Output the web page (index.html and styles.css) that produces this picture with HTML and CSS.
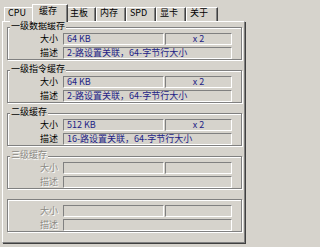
FILE: index.html
```html
<!DOCTYPE html>
<html lang="zh-CN">
<head>
<meta charset="utf-8">
<title>CPU-Z 缓存</title>
<link rel="stylesheet" href="styles.css">
</head>
<body>
<div class="tabs">
  <div class="tab">CPU</div>
  <div class="tab tab-active">缓存</div>
  <div class="tab">主板</div>
  <div class="tab">内存</div>
  <div class="tab">SPD</div>
  <div class="tab">显卡</div>
  <div class="tab tab-wide">关于</div>
</div>
<div class="panel">
  <section class="group">
    <span class="group-title">一级数据缓存</span>
    <div class="row"><span class="label">大小</span><span class="field f-size">64 KB</span><span class="field f-count">x 2</span></div>
    <div class="row"><span class="label">描述</span><span class="field f-desc">2-路设置关联，64-字节行大小</span></div>
  </section>
  <section class="group">
    <span class="group-title">一级指令缓存</span>
    <div class="row"><span class="label">大小</span><span class="field f-size">64 KB</span><span class="field f-count">x 2</span></div>
    <div class="row"><span class="label">描述</span><span class="field f-desc">2-路设置关联，64-字节行大小</span></div>
  </section>
  <section class="group">
    <span class="group-title">二级缓存</span>
    <div class="row"><span class="label">大小</span><span class="field f-size">512 KB</span><span class="field f-count">x 2</span></div>
    <div class="row"><span class="label">描述</span><span class="field f-desc">16-路设置关联，64-字节行大小</span></div>
  </section>
  <section class="group disabled">
    <span class="group-title">三级缓存</span>
    <div class="row"><span class="label">大小</span><span class="field f-size"></span><span class="field f-count"></span></div>
    <div class="row"><span class="label">描述</span><span class="field f-desc"></span></div>
  </section>
  <section class="group disabled">
    <div class="row"><span class="label">大小</span><span class="field f-size"></span><span class="field f-count"></span></div>
    <div class="row"><span class="label">描述</span><span class="field f-desc"></span></div>
  </section>
</div>
</body>
</html>
```
FILE: styles.css
```css
html, body {
  margin: 0;
  padding: 0;
}
body {
  width: 264px;
  height: 247px;
  overflow: hidden;
  background: #d6d3cc;
  font-family: "Noto Sans CJK SC", "Noto Sans", sans-serif;
  font-size: 9px;
  color: #000;
}

.tabs {
  display: flex;
  align-items: flex-end;
  height: 21px;
  padding-left: 4px;
}
.tab {
  box-sizing: border-box;
  width: 30px;
  height: 14px;
  padding: 0 0 3px 3px;
  line-height: 10px;
  border-top: 1px solid #fff;
  border-left: 1px solid #fff;
  border-right: 1px solid #404040;
  box-shadow: inset -1px 0 0 #808080;
  white-space: nowrap;
}
.tab-wide {
  width: 32px;
}
.tab-active {
  position: relative;
  z-index: 1;
  width: 36px;
  height: 18px;
  margin: 0 -2px -1px;
  padding: 1px 0 6px 6px;
  background: #d6d3cc;
}

.panel {
  box-sizing: border-box;
  width: 243px;
  margin-left: 2px;
  padding: 5px 2px 10px 4px;
  border-top: 1px solid #fff;
  border-left: 1px solid #fff;
  border-right: 1px solid #808080;
  border-bottom: 1px solid #808080;
  box-shadow: 1px 1px 0 #404040;
  display: flex;
  flex-direction: column;
  gap: 10px;
}

.group {
  position: relative;
  box-sizing: border-box;
  height: 33px;
  padding-top: 5px;
  border: 1px solid #808080;
  box-shadow: inset 1px 1px 0 #fff, 1px 1px 0 #fff;
  display: flex;
  flex-direction: column;
  gap: 2px;
}
.group-title {
  position: absolute;
  top: -7px;
  left: 2px;
  padding: 0 1px;
  line-height: 10px;
  background: #d6d3cc;
  white-space: nowrap;
}

.row {
  display: flex;
  align-items: center;
  height: 12px;
}
.label {
  width: 50px;
  margin-right: 5px;
  text-align: right;
  line-height: 12px;
  white-space: nowrap;
}
.field {
  box-sizing: border-box;
  height: 12px;
  padding-left: 3px;
  border: 1px solid;
  border-color: #808080 #fff #fff #808080;
  line-height: 10px;
  color: #1d1d86;
  white-space: nowrap;
  overflow: hidden;
}
.f-size {
  width: 101px;
}
.f-count {
  width: 67px;
  margin-left: 1px;
  padding-left: 0;
  text-align: center;
}
.f-desc {
  width: 169px;
}

.disabled .label,
.disabled .group-title {
  color: #8c8a85;
  text-shadow: 1px 1px 0 #fff;
}
```
